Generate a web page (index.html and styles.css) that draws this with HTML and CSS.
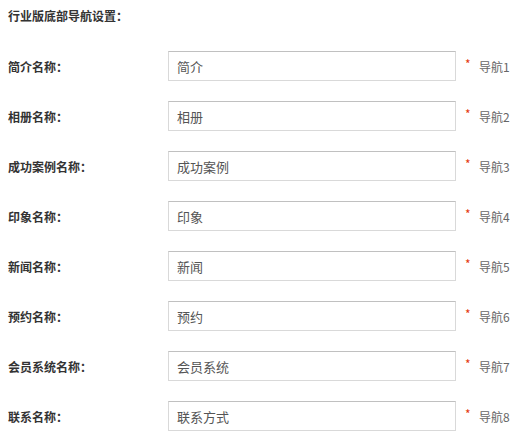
FILE: index.html
```html
<!DOCTYPE html>
<html lang="zh-CN">
<head>
<meta charset="utf-8">
<title>行业版底部导航设置</title>
<link rel="stylesheet" href="styles.css">
</head>
<body>
<div class="panel">
  <div class="title">行业版底部导航设置：</div>
  <div class="rows">
    <div class="row"><label class="label">简介名称：</label><input class="field" type="text" value="简介"><span class="star">*</span><span class="hint">导航1</span></div>
    <div class="row"><label class="label">相册名称：</label><input class="field" type="text" value="相册"><span class="star">*</span><span class="hint">导航2</span></div>
    <div class="row"><label class="label">成功案例名称：</label><input class="field" type="text" value="成功案例"><span class="star">*</span><span class="hint">导航3</span></div>
    <div class="row"><label class="label">印象名称：</label><input class="field" type="text" value="印象"><span class="star">*</span><span class="hint">导航4</span></div>
    <div class="row"><label class="label">新闻名称：</label><input class="field" type="text" value="新闻"><span class="star">*</span><span class="hint">导航5</span></div>
    <div class="row"><label class="label">预约名称：</label><input class="field" type="text" value="预约"><span class="star">*</span><span class="hint">导航6</span></div>
    <div class="row"><label class="label">会员系统名称：</label><input class="field" type="text" value="会员系统"><span class="star">*</span><span class="hint">导航7</span></div>
    <div class="row"><label class="label">联系名称：</label><input class="field" type="text" value="联系方式"><span class="star">*</span><span class="hint">导航8</span></div>
  </div>
</div>
</body>
</html>
```
FILE: styles.css
```css
html, body {
  margin: 0;
  padding: 0;
  background: #fff;
}
body {
  font-family: "Noto Sans CJK SC", "Noto Sans", sans-serif;
  font-size: 12px;
  color: #333;
}
.panel {
  padding: 4px 0 0 8px;
}
.title {
  font-weight: bold;
  line-height: 24px;
  height: 24px;
  color: #333;
}
.rows {
  display: flex;
  flex-direction: column;
  gap: 20px;
  margin-top: 23px;
}
.row {
  display: flex;
  align-items: center;
  height: 30px;
}
.label {
  width: 160px;
  font-weight: bold;
  color: #333;
}
.field {
  box-sizing: border-box;
  width: 288px;
  height: 30px;
  margin: 0;
  padding: 0 8px;
  border: 1px solid #d9d9d9;
  border-top-color: #c0c0c0;
  font-family: "Noto Sans CJK SC", "Noto Sans", sans-serif;
  font-size: 13px;
  color: #555;
  outline: none;
}
.star {
  margin-left: 9px;
  color: #e4380d;
  font-size: 12px;
  width: 14px;
  position: relative;
  top: -3px;
}
.hint {
  color: #666;
  font-size: 12px;
}
```
